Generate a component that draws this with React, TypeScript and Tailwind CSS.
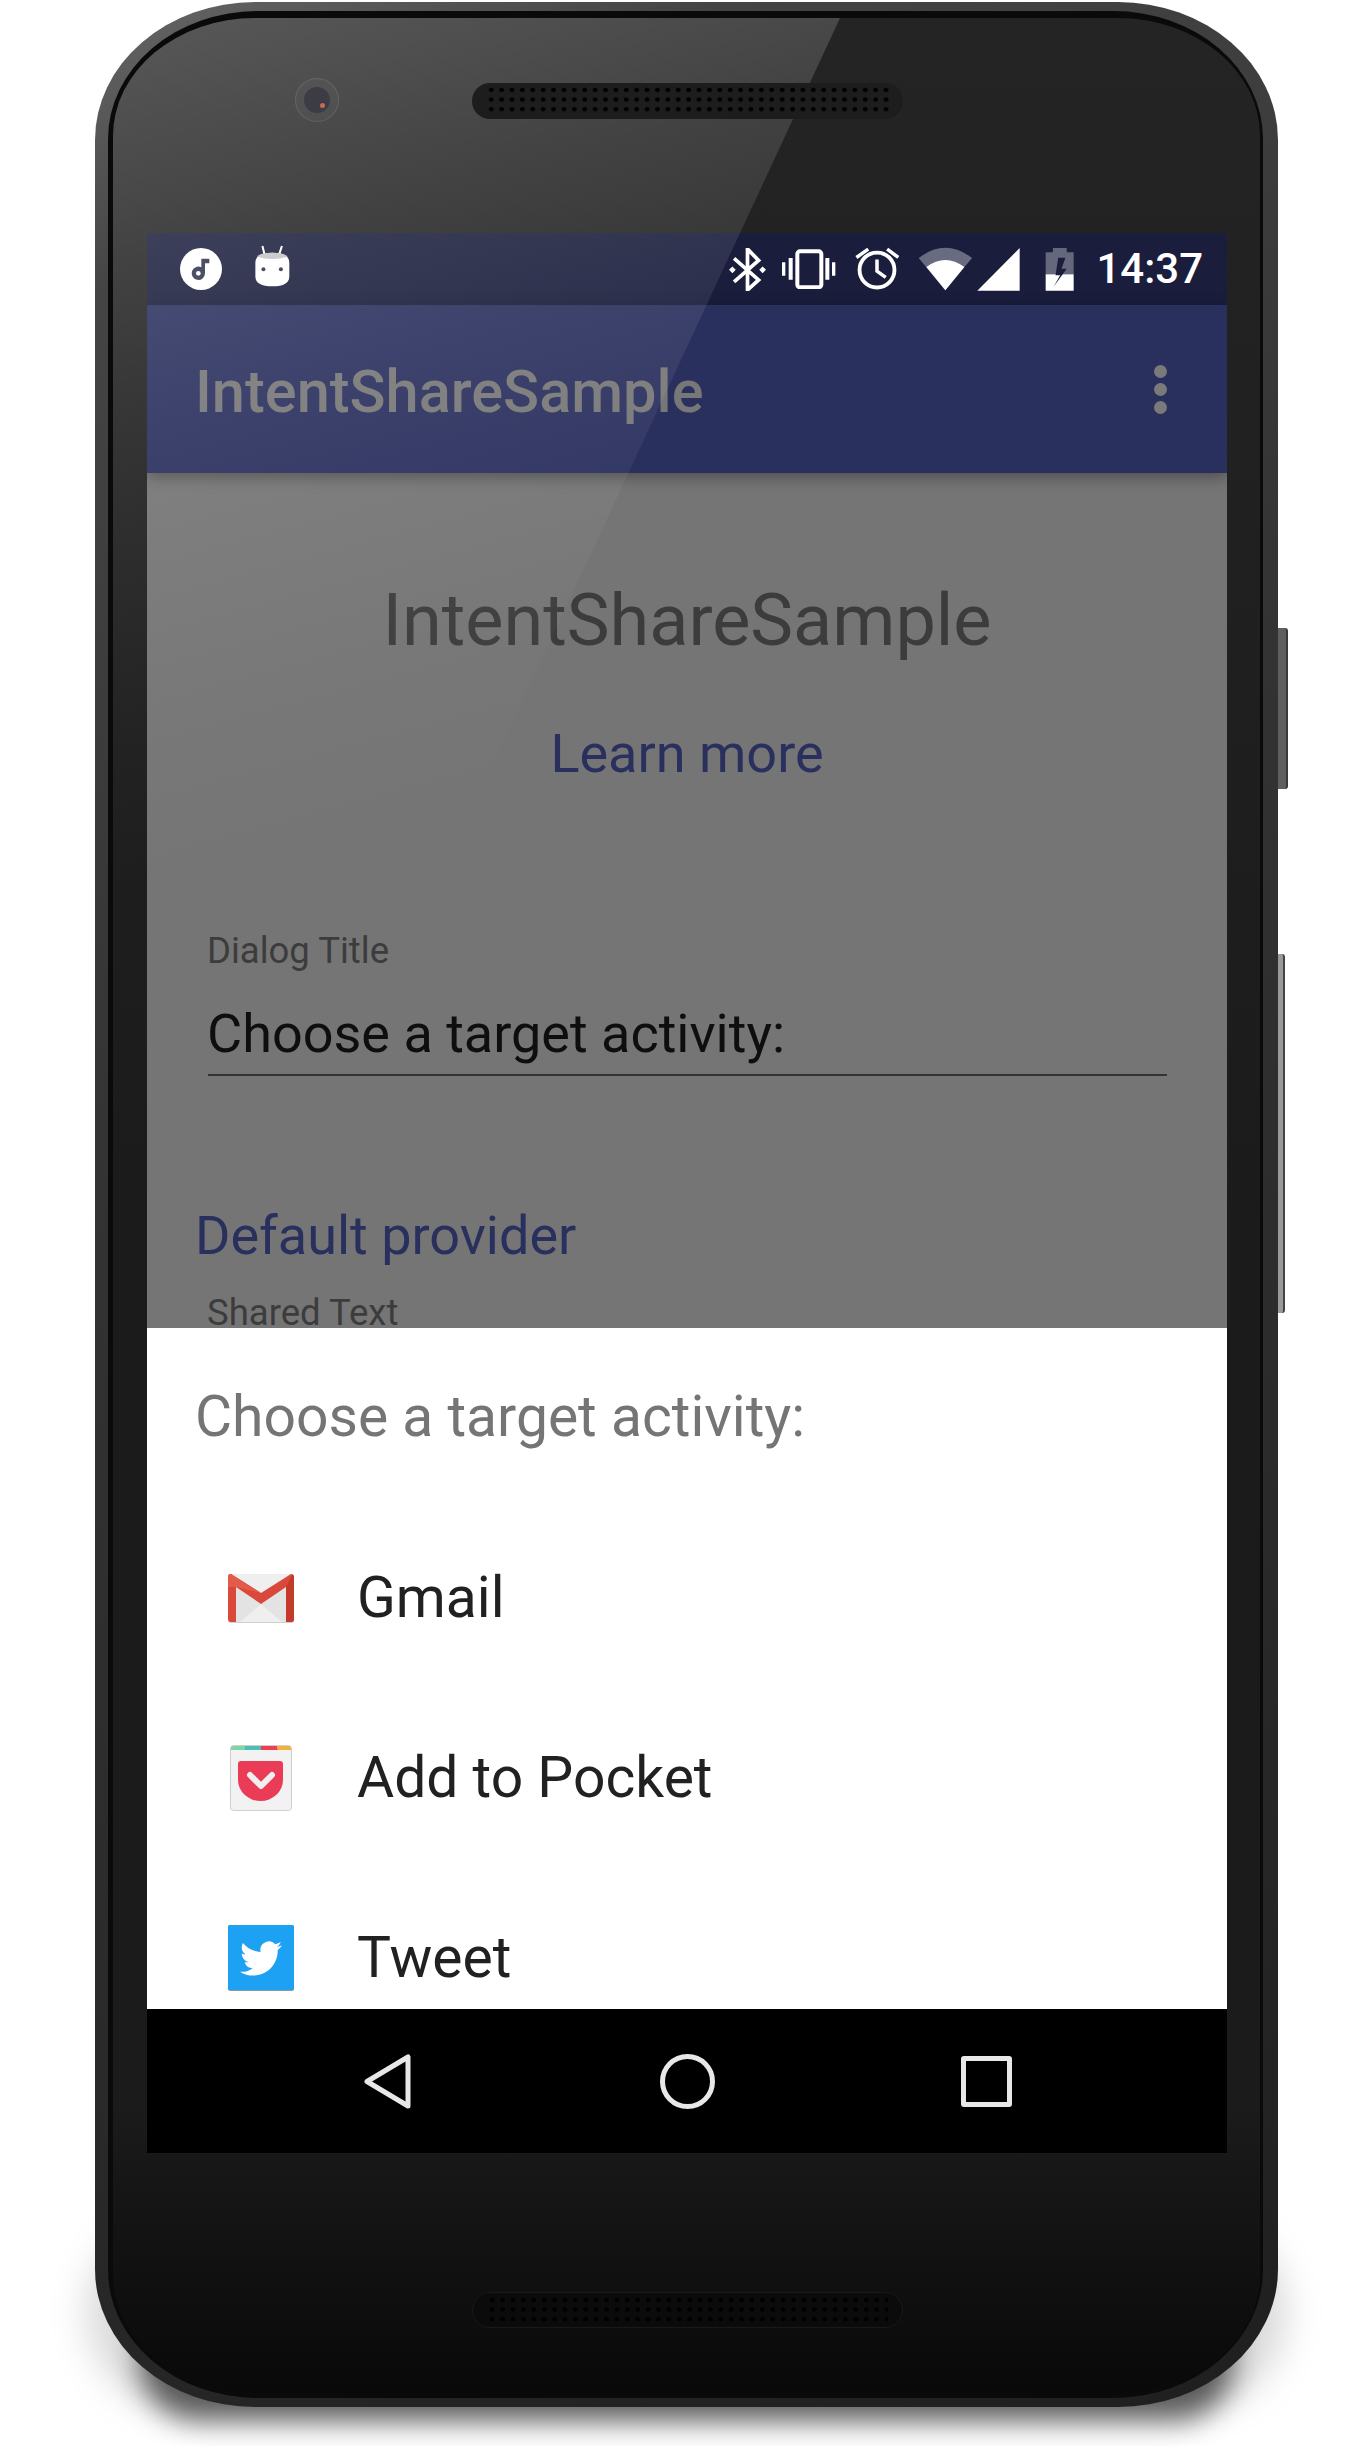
import React from 'react';

const Speaker = ({ dark }: { dark?: boolean }) => (
  <div
    className={`w-[431px] h-[36px] rounded-[18px] px-[14px] py-[2px] ${
      dark ? 'bg-[#0b0b0b] border border-[#191919]' : 'bg-[#1d1d1d]'
    }`}
  >
    <div className="h-[29px] bg-[radial-gradient(circle,#000_2px,transparent_2.6px)] bg-[length:10.4px_9.7px]"></div>
  </div>
);

const StatusIcons = () => (
  <div className="flex items-center">
    <svg width="37" height="43" viewBox="90 45 110 128" className="ml-[30px]">
      <path d="M105 76 178 140 145 170V48L178 82 105 146" fill="none" stroke="#fff" strokeWidth="11" />
      <path d="M100 100 110 110 100 120 90 110ZM190 100 200 110 190 120 180 110Z" fill="#fff" />
    </svg>
    <svg width="54" height="40" viewBox="250 48 162 120" className="ml-[16px]">
      <rect x="296" y="55" width="72" height="108" rx="8" fill="none" stroke="#fff" strokeWidth="12" />
      <path d="M270 75h12v65h-12zM250 88h10v40h-10zM380 75h12v65h-12zM400 88h10v40h-10z" fill="#fff" />
    </svg>
    <svg width="44" height="44" viewBox="472 42 126 126" className="ml-[19px]">
      <circle cx="535" cy="108" r="50" fill="none" stroke="#fff" strokeWidth="11" />
      <path d="M535 78V111L560 129M476 72 510 48M596 72 564 48" fill="none" stroke="#fff" strokeWidth="10" />
    </svg>
    <svg width="54" height="44" viewBox="658 40 162 132" className="ml-[19px]">
      <path d="M740 170 660 73Q740 12 820 73Z" fill="#fff" fillOpacity="0.35" />
      <path d="M740 170 683 100Q740 58 797 100Z" fill="#fff" />
    </svg>
    <svg width="43" height="43" viewBox="834 42 129 129" className="ml-[5px]">
      <path d="M835 170H962V42Z" fill="#fff" />
    </svg>
    <svg width="29" height="44" viewBox="1036 40 88 132" className="ml-[25px]">
      <path d="M1060 42h42v13h21v67h-85V55h22z" fill="#fff" fillOpacity="0.33" />
      <path d="M1038 122h85v50h-85z" fill="#fff" />
      <path d="M1098 72H1076L1068 125H1082L1062 160 1102 105H1086Z" fill="#1a1d3c" />
    </svg>
    <span className="ml-[22px] mr-[24px] text-[42px] leading-[72px] font-medium text-white">14:37</span>
  </div>
);

const GmailIcon = () => (
  <svg width="66" height="49" viewBox="0 0 66 49">
    <rect width="66" height="49" rx="3" fill="#cfcfcf" />
    <rect width="66" height="48" rx="3" fill="#efefef" />
    <path d="M8 13 33 30 12 48H8ZM58 13 33 30 54 48H58Z" fill="#e3e3e3" />
    <path d="M0 3Q0 0 3 0L33 19 63 0Q66 0 66 3V45Q66 48 63 48H58V13L33 30 8 13V48H3Q0 48 0 45Z" fill="#d9483a" />
    <path d="M58 13V48H63Q66 48 66 45V3Q66 1 64 1Z" fill="#c43a28" />
    <path d="M0 3Q0 0 3 0L33 19 8 13H0Z" fill="#e25b4b" />
  </svg>
);

const PocketIcon = () => (
  <svg width="62" height="66" viewBox="0 0 62 66">
    <rect x="0.5" y="0.5" width="61" height="65" rx="3" fill="#f2f2f2" stroke="#cfcfcf" />
    <path d="M1 5V3Q1 1 3 1H15L14 5Z" fill="#7ed6a5" />
    <path d="M15 1H31V5H14Z" fill="#4fbdb8" />
    <path d="M31 1H47L48 5H31Z" fill="#ef3f56" />
    <path d="M47 1H59Q61 1 61 3V5H48Z" fill="#f2b13d" />
    <path d="M8 19Q8 16 11 16H50Q53 16 53 19V35A22.5 21 0 0 1 8 35Z" fill="#ea3c56" />
    <path d="M20 30 31 41 42 30" fill="none" stroke="#efefef" strokeWidth="6" strokeLinecap="round" strokeLinejoin="round" />
  </svg>
);

const TwitterIcon = () => (
  <svg width="66" height="66" viewBox="0 0 66 66">
    <rect width="66" height="66" rx="2" fill="#8a9aa5" />
    <rect width="66" height="65" rx="2" fill="#1da1f2" />
    <g transform="translate(12 12.5) scale(1.75)">
      <path
        d="M23.953 4.57a10 10 0 01-2.825.775 4.958 4.958 0 002.163-2.723c-.951.555-2.005.959-3.127 1.184a4.92 4.92 0 00-8.384 4.482C7.69 8.095 4.067 6.13 1.64 3.162a4.822 4.822 0 00-.666 2.475c0 1.71.87 3.213 2.188 4.096a4.904 4.904 0 01-2.228-.616v.06a4.923 4.923 0 003.946 4.827 4.996 4.996 0 01-2.212.085 4.936 4.936 0 004.604 3.417 9.867 9.867 0 01-6.102 2.105c-.39 0-.779-.023-1.17-.067a13.995 13.995 0 007.557 2.209c9.053 0 13.998-7.496 13.998-13.985 0-.21 0-.42-.015-.63A9.935 9.935 0 0024 4.59z"
        fill="#fff"
      />
    </g>
  </svg>
);

const targets = [
  { label: 'Gmail', icon: <GmailIcon /> },
  { label: 'Add to Pocket', icon: <PocketIcon /> },
  { label: 'Tweet', icon: <TwitterIcon /> },
];

export default function App() {
  return (
    <div className="relative h-[2446px] w-[1370px] overflow-hidden bg-white font-['Roboto',sans-serif]">
      <div className="relative ml-[95px] mt-[2px] w-[1183px]">
        {/* shadow under the phone */}
        <div className="absolute left-[-8px] right-[-8px] bottom-[0px] h-[190px] rounded-[120px] bg-black/15 blur-[18px]"></div>
        <div className="absolute left-[45px] right-[45px] bottom-[-14px] h-[120px] rounded-[100px] bg-black/60 blur-[14px]"></div>

        {/* side buttons */}
        <div className="absolute left-full top-[626px] h-[161px] w-[10px] rounded-r-[3px] bg-[#5f5f5f] border-r-2 border-[#3a3a3a]"></div>
        <div className="absolute left-full top-[952px] h-[359px] w-[7px] rounded-r-[3px] bg-[#9a9a9a] border-r-2 border-[#444]"></div>

        {/* metal band */}
        <div className="relative rounded-[160px/138px] bg-[linear-gradient(155deg,#666_0,#444_10%,#333_40%,#2a2a2a_70%,#1f1f1f_100%)] pt-[9px] pb-[9px] pl-[13px] pr-[15px]">
          {/* groove */}
          <div className="rounded-[150px/128px] bg-[#0a0a0a] pt-[7px] pb-[5px] pl-[5px] pr-[3px]">
            {/* glass */}
            <div className="relative overflow-hidden rounded-[142px/118px] bg-[linear-gradient(180deg,#242424_0,#1b1b1b_50%,#1b1b1b_88%,#090909_100%)] pl-[34px] pr-[33px]">
              <div className="relative z-20 flex h-[215px] items-start pt-[60px]">
                <div className="ml-[148px] flex h-[44px] w-[44px] items-center justify-center rounded-full border border-white/10 bg-white/[0.03]">
                  <div className="relative h-[26px] w-[26px] rounded-full bg-[#3c3c44]">
                    <div className="absolute left-[16px] top-[16px] h-[5px] w-[5px] rounded-full bg-[#c56a55]"></div>
                  </div>
                </div>
                <div className="ml-[133px] mt-[5px]">
                  <Speaker />
                </div>
              </div>

              <div className="h-[1920px] w-[1080px] overflow-hidden">
                {/* status bar */}
                <div className="flex h-[72px] items-center justify-between bg-[#1a1d3c]">
                  <div className="flex items-center">
                    <svg width="42" height="42" viewBox="60 44 126 126" className="ml-[33px]">
                      <circle cx="123" cy="107" r="63" fill="#fff" />
                      <path d="M124 76H148V90H135V120A20 20 0 1 1 124 102Z" fill="#30344f" />
                      <circle cx="115" cy="120" r="7" fill="#fff" />
                    </svg>
                    <svg width="37" height="43" viewBox="285 35 110 128" className="ml-[32px] mb-[6px]">
                      <path d="M310 38 316 62M368 38 360 62" stroke="#fff" strokeWidth="6" fill="none" />
                      <path d="M289 88Q289 58 339 58 390 58 390 88V128Q390 158 340 158 289 158 289 128Z" fill="#fff" />
                      <path d="M294 70Q304 58 339 58 374 58 385 70 339 84 294 70Z" fill="#c4c4c8" />
                      <circle cx="313" cy="107" r="6" fill="#30344f" />
                      <circle cx="365" cy="107" r="6" fill="#30344f" />
                    </svg>
                  </div>
                  <StatusIcons />
                </div>

                {/* action bar */}
                <div className="relative z-10 flex h-[168px] items-center justify-between bg-[#2a305e] pl-[48px] pr-[60px] shadow-[0_4px_14px_rgba(0,0,0,0.35)]">
                  <span className="mt-[6px] text-[59.5px] font-medium leading-[80px] text-[#777]">IntentShareSample</span>
                  <div className="flex flex-col gap-[5px]">
                    <div className="h-[13px] w-[13px] rounded-full bg-[#7a7a7a]"></div>
                    <div className="h-[13px] w-[13px] rounded-full bg-[#7a7a7a]"></div>
                    <div className="h-[13px] w-[13px] rounded-full bg-[#7a7a7a]"></div>
                  </div>
                </div>

                {/* dimmed activity */}
                <div className="h-[855px] overflow-hidden bg-[#757575] pt-[108px]">
                  <div className="text-center text-[72px] leading-[80px] text-[#3c3c3c]">IntentShareSample</div>
                  <div className="mt-[58px] text-center text-[54px] leading-[70px] text-[#2a305e]">Learn more</div>
                  <div className="ml-[60px] mt-[140px] text-[36.5px] leading-[44px] text-[#3c3c3c]">Dialog Title</div>
                  <div className="ml-[60px] mt-[26px] text-[54px] leading-[70px] text-[#0e0e0e]">Choose a target activity:</div>
                  <div className="ml-[61px] mr-[60px] mt-[5px] h-[2px] bg-[#333]"></div>
                  <div className="ml-[48px] mt-[130px] text-[54px] leading-[60px] text-[#2a305e]">Default provider</div>
                  <div className="ml-[60px] mt-[25px] text-[36.5px] leading-[44px] text-[#3c3c3c]">Shared Text</div>
                </div>

                {/* chooser sheet */}
                <div className="h-[681px] overflow-hidden bg-white">
                  <div className="h-[180px] pl-[48px] pt-[49px] text-[57px] leading-[80px] text-[#757575]">Choose a target activity:</div>
                  {targets.map((t) => (
                    <div key={t.label} className="flex h-[180px] items-center">
                      <div className="ml-[81px] flex w-[66px] justify-center">{t.icon}</div>
                      <span className="ml-[63px] text-[57px] leading-[70px] text-[#212121]">{t.label}</span>
                    </div>
                  ))}
                </div>

                {/* nav bar */}
                <div className="flex h-[144px] items-center bg-black pl-[217px]">
                  <svg width="47" height="55" viewBox="0 0 47 55">
                    <path d="M44 3V52L3 27.5Z" fill="none" stroke="#e8e8e8" strokeWidth="5" strokeLinejoin="round" />
                  </svg>
                  <div className="ml-[249px] h-[55px] w-[55px] rounded-full border-[5px] border-[#e8e8e8]"></div>
                  <div className="ml-[246px] h-[51px] w-[51px] rounded-[3px] border-[5px] border-[#e8e8e8]"></div>
                </div>
              </div>

              {/* chin */}
              <div className="flex h-[240px] justify-center pt-[139px]">
                <Speaker dark />
              </div>

              {/* glass reflection */}
              <div className="pointer-events-none absolute inset-0 z-10 bg-[linear-gradient(165deg,rgba(255,255,255,0.24)_0,rgba(255,255,255,0.14)_250px,rgba(255,255,255,0.09)_400px,rgba(255,255,255,0.06)_520px,rgba(255,255,255,0.02)_700px,transparent_850px)] [clip-path:polygon(0_0,727px_0,0_1563px)]"></div>
            </div>
          </div>
        </div>
      </div>
    </div>
  );
}
